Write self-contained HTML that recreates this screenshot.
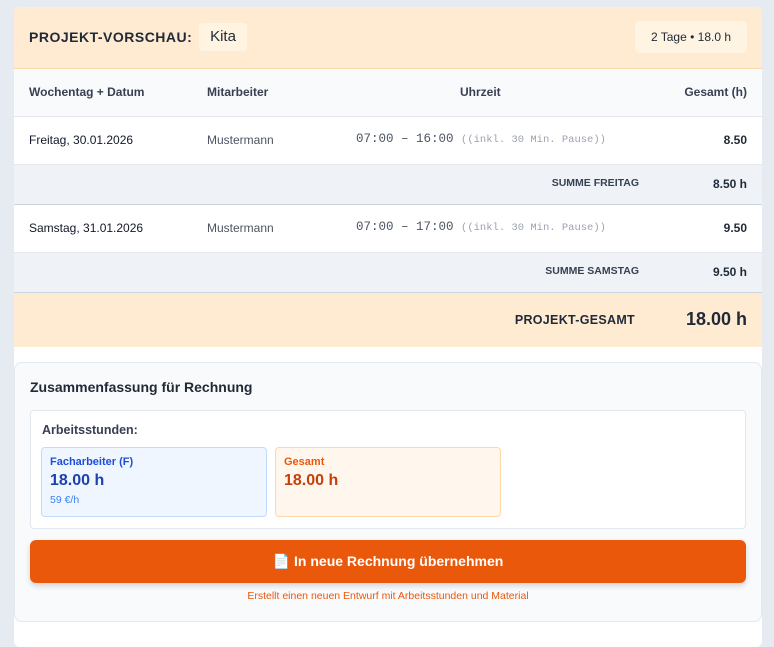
<!DOCTYPE html>
<html><head><meta charset="utf-8"><style>
*{box-sizing:border-box;margin:0;padding:0}
body{width:774px;height:604px;overflow:hidden;background:#e6ebf2;font-family:"Liberation Sans",sans-serif;color:#1f2937;position:relative}
.card{position:absolute;left:14px;top:7px;width:748px;height:640px;background:#fff;border-radius:6px;overflow:hidden}
.hdr{height:62px;background:#feebd2;border-bottom:1px solid #fcd9a8;position:relative}
.hdr .t{position:absolute;left:15px;top:22px;font-size:14px;font-weight:bold;letter-spacing:0.5px;color:#1f2937}
.hdr .k{position:absolute;left:185px;top:16px;width:48px;height:28px;background:#fff3e2;border-radius:4px;font-size:15px;line-height:28px;text-align:center}
.hdr .r{position:absolute;right:15px;top:14px;width:112px;height:32px;background:#fff3e2;border-radius:4px;font-size:12px;line-height:32px;text-align:center}
.row{position:relative;border-bottom:1px solid #e5e7eb;font-size:12px}
.row span{position:absolute}
.th{height:48px;background:#f8fafc;font-weight:bold;color:#374151}
.th span{top:16px}
.d{height:48px}
.d span{top:16px}
.mono{font-family:"Liberation Mono",monospace;font-size:12.5px;color:#4b5563}
.mono i{font-style:normal;color:#9ca3af;font-size:10.5px}
.s{height:40px;background:#eff3f8;border-bottom:1px solid #cbd5e1;font-weight:bold}
.s span{top:12px}
.tot{height:54px;background:#feebd2;position:relative}
.sum{position:absolute;left:14px;top:362px;width:748px;height:260px;background:#f8fafc;border:1px solid #e2e8f0;border-radius:8px}
</style></head><body>
<div class="card">
<div class="hdr"><div class="t">PROJEKT-VORSCHAU:</div><div class="k">Kita</div><div class="r">2 Tage • 18.0 h</div></div>
<div class="row th"><span style="left:15px">Wochentag + Datum</span><span style="left:193px">Mitarbeiter</span><span style="left:446px">Uhrzeit</span><span style="right:15px">Gesamt (h)</span></div>
<div class="row d"><span style="left:15px;color:#111827">Freitag, 30.01.2026</span><span style="left:193px;color:#4b5563">Mustermann</span><span class="mono" style="left:342px;top:15px">07:00 – 16:00 <i>((inkl. 30 Min. Pause))</i></span><span style="right:15px;font-weight:bold">8.50</span></div>
<div class="row s"><span style="right:123px;font-size:10.5px;color:#374151">SUMME FREITAG</span><span style="right:15px">8.50 h</span></div>
<div class="row d"><span style="left:15px;color:#111827">Samstag, 31.01.2026</span><span style="left:193px;color:#4b5563">Mustermann</span><span class="mono" style="left:342px;top:15px">07:00 – 17:00 <i>((inkl. 30 Min. Pause))</i></span><span style="right:15px;font-weight:bold">9.50</span></div>
<div class="row s"><span style="right:123px;font-size:10.5px;color:#374151">SUMME SAMSTAG</span><span style="right:15px">9.50 h</span></div>
<div class="tot"><span style="position:absolute;right:127px;top:20px;font-size:12.5px;font-weight:bold;letter-spacing:0.3px">PROJEKT-GESAMT</span><span style="position:absolute;right:15px;top:16px;font-size:18px;font-weight:bold">18.00 h</span></div>
</div>
<div class="sum">
<div style="position:absolute;left:15px;top:16px;font-size:14px;font-weight:bold;color:#1f2937">Zusammenfassung für Rechnung</div>
<div style="position:absolute;left:15px;top:47px;width:716px;height:119px;background:#fff;border:1px solid #e2e8f0;border-radius:4px">
<div style="position:absolute;left:11px;top:12px;font-size:12.5px;font-weight:bold;color:#374151">Arbeitsstunden:</div>
<div style="position:absolute;left:10px;top:36px;width:226px;height:70px;background:#eff6ff;border:1px solid #bfdbfe;border-radius:4px">
<div style="position:absolute;left:8px;top:8px;font-size:11px;font-weight:bold;color:#1d4ed8">Facharbeiter (F)</div>
<div style="position:absolute;left:8px;top:24px;font-size:16px;font-weight:bold;color:#1e40af">18.00 h</div>
<div style="position:absolute;left:8px;top:46px;font-size:10.5px;color:#3b82f6">59 €/h</div></div>
<div style="position:absolute;left:244px;top:36px;width:226px;height:70px;background:#fff7ed;border:1px solid #fed7aa;border-radius:4px">
<div style="position:absolute;left:8px;top:8px;font-size:11px;font-weight:bold;color:#ea580c">Gesamt</div>
<div style="position:absolute;left:8px;top:24px;font-size:16px;font-weight:bold;color:#c2410c">18.00 h</div></div>
</div>
<div style="position:absolute;left:15px;top:177px;width:716px;height:43px;background:#ea580c;border-radius:6px;box-shadow:0 3px 6px rgba(0,0,0,0.15);color:#fff;font-weight:bold;font-size:14px;text-align:center;line-height:43px">📄 In neue Rechnung übernehmen</div>
<div style="position:absolute;left:0;width:746px;top:227px;text-align:center;font-size:10.5px;color:#ea580c">Erstellt einen neuen Entwurf mit Arbeitsstunden und Material</div>
</div>
</body></html>
